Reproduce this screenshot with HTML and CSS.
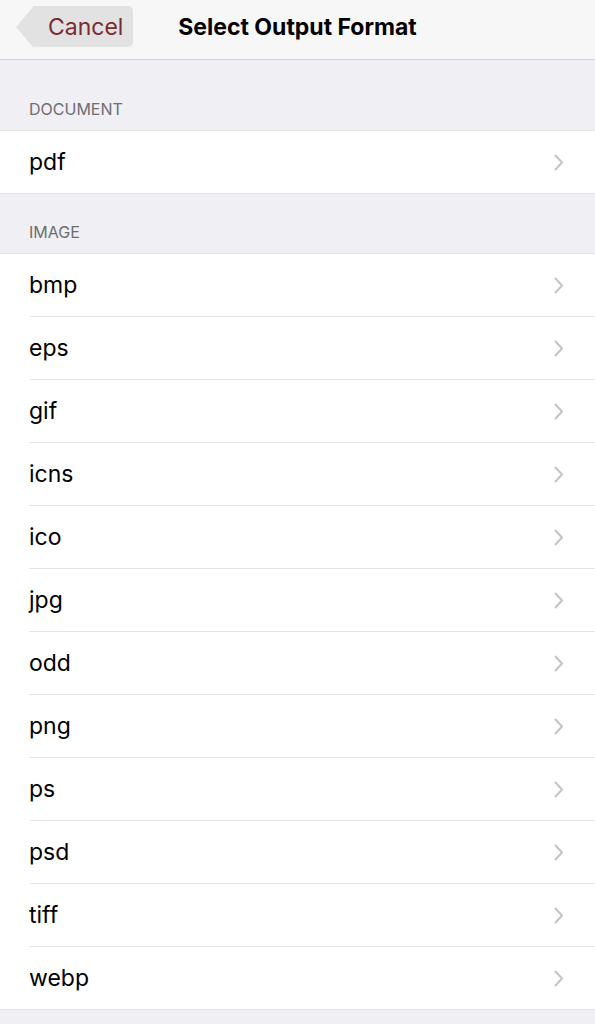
FILE: index.html
```html
<!doctype html>
<html lang="en">

<head>
  <title>Select Output Format</title>
  <meta charset="utf-8" />
  <link rel="stylesheet" href="styles.css">
</head>

<body>
  <header class="navbar">
    <div class="nav-left">
      <button class="back-btn"><span class="back-label">Cancel</span></button>
    </div>
    <h1 class="nav-title">Select Output Format</h1>
    <div class="nav-right"></div>
  </header>

  <main class="table">
    <section class="group group-first">
      <h2 class="group-header">DOCUMENT</h2>
      <ul class="rows">
        <li class="row"><span class="row-text">pdf</span><svg class="chevron" viewBox="0 0 10 17"><polyline points="1.5,1.5 8,8.5 1.5,15.5" /></svg></li>
      </ul>
    </section>

    <section class="group">
      <h2 class="group-header">IMAGE</h2>
      <ul class="rows">
        <li class="row"><span class="row-text">bmp</span><svg class="chevron" viewBox="0 0 10 17"><polyline points="1.5,1.5 8,8.5 1.5,15.5" /></svg></li>
        <li class="row"><span class="row-text">eps</span><svg class="chevron" viewBox="0 0 10 17"><polyline points="1.5,1.5 8,8.5 1.5,15.5" /></svg></li>
        <li class="row"><span class="row-text">gif</span><svg class="chevron" viewBox="0 0 10 17"><polyline points="1.5,1.5 8,8.5 1.5,15.5" /></svg></li>
        <li class="row"><span class="row-text">icns</span><svg class="chevron" viewBox="0 0 10 17"><polyline points="1.5,1.5 8,8.5 1.5,15.5" /></svg></li>
        <li class="row"><span class="row-text">ico</span><svg class="chevron" viewBox="0 0 10 17"><polyline points="1.5,1.5 8,8.5 1.5,15.5" /></svg></li>
        <li class="row"><span class="row-text">jpg</span><svg class="chevron" viewBox="0 0 10 17"><polyline points="1.5,1.5 8,8.5 1.5,15.5" /></svg></li>
        <li class="row"><span class="row-text">odd</span><svg class="chevron" viewBox="0 0 10 17"><polyline points="1.5,1.5 8,8.5 1.5,15.5" /></svg></li>
        <li class="row"><span class="row-text">png</span><svg class="chevron" viewBox="0 0 10 17"><polyline points="1.5,1.5 8,8.5 1.5,15.5" /></svg></li>
        <li class="row"><span class="row-text">ps</span><svg class="chevron" viewBox="0 0 10 17"><polyline points="1.5,1.5 8,8.5 1.5,15.5" /></svg></li>
        <li class="row"><span class="row-text">psd</span><svg class="chevron" viewBox="0 0 10 17"><polyline points="1.5,1.5 8,8.5 1.5,15.5" /></svg></li>
        <li class="row"><span class="row-text">tiff</span><svg class="chevron" viewBox="0 0 10 17"><polyline points="1.5,1.5 8,8.5 1.5,15.5" /></svg></li>
        <li class="row"><span class="row-text">webp</span><svg class="chevron" viewBox="0 0 10 17"><polyline points="1.5,1.5 8,8.5 1.5,15.5" /></svg></li>
      </ul>
    </section>
  </main>
</body>

</html>
```

FILE: styles.css
```css
html {
  font-family: Inter, "Liberation Sans", sans-serif;
  background-color: #efeff4;
}

body {
  margin: 0;
  min-height: 1024px;
}

.navbar {
  display: grid;
  grid-template-columns: 1fr auto 1fr;
  align-items: center;
  height: 53px;
  padding-bottom: 6px;
  background-color: #f7f7f7;
  border-bottom: 1px solid #cfcfd3;
}

.nav-left {
  padding-left: 16px;
}

.back-btn {
  display: flex;
  align-items: center;
  height: 41px;
  padding: 0;
  border: none;
  background: none;
  font: inherit;
}

.back-btn:before {
  content: "";
  width: 0;
  height: 0;
  border-top: 20.5px solid transparent;
  border-bottom: 20.5px solid transparent;
  border-right: 17px solid #e2e2e3;
}

.back-label {
  display: flex;
  align-items: center;
  height: 41px;
  padding: 0 10px 0 15px;
  background-color: #e2e2e3;
  border-radius: 0 5px 5px 0;
  color: #7b2b2f;
  font-size: 23px;
}

.nav-title {
  margin: 0;
  font-size: 23px;
  font-weight: 700;
  color: #000;
}

.group-header {
  margin: 0;
  padding: 0 29px 11px;
  height: 48px;
  display: flex;
  align-items: flex-end;
  font-size: 16px;
  font-weight: 400;
  color: #6d6d72;
}

.group-first .group-header {
  height: 59px;
}

.rows {
  list-style: none;
  margin: 0;
  padding: 0;
  background-color: #fff;
  border-top: 1px solid #e4e4e7;
  border-bottom: 1px solid #e4e4e7;
}

.row {
  display: flex;
  align-items: center;
  height: 62px;
  margin-left: 29px;
  padding-right: 31px;
}

.row + .row {
  border-top: 1px solid #e4e4e7;
}

.row-text {
  flex: 1;
  font-size: 23px;
  color: #000;
}

.chevron {
  width: 10px;
  height: 17px;
  fill: none;
  stroke: #c4c4c8;
  stroke-width: 2;
  stroke-linecap: round;
  stroke-linejoin: round;
}
```
